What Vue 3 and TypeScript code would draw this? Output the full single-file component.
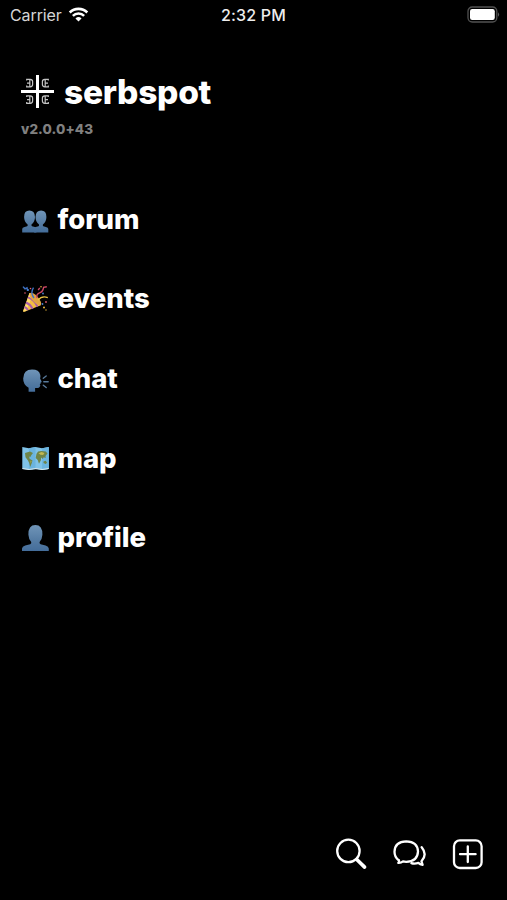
<script setup lang="ts">
interface MenuItem {
  icon: 'people' | 'party' | 'speaking' | 'map' | 'person'
  label: string
}

const items: MenuItem[] = [
  { icon: 'people', label: 'forum' },
  { icon: 'party', label: 'events' },
  { icon: 'speaking', label: 'chat' },
  { icon: 'map', label: 'map' },
  { icon: 'person', label: 'profile' },
]
</script>

<template>
  <div class="screen">
    <svg class="defs" width="0" height="0" aria-hidden="true">
      <defs>
        <linearGradient id="blue" x1="0" y1="0" x2="0" y2="1">
          <stop offset="0" stop-color="#7095b8" />
          <stop offset="0.6" stop-color="#547ba3" />
          <stop offset="1" stop-color="#446d9a" />
        </linearGradient>
      </defs>
    </svg>

    <div class="status">
      <div class="carrier">
        <span>Carrier</span>
        <svg width="21" height="16" viewBox="0 0 22 16" fill="none" stroke="#fff">
          <path d="M1.8 5.4a13 13 0 0 1 18.4 0" stroke-width="2.7" />
          <path d="M5.1 8.9a8.2 8.2 0 0 1 11.8 0" stroke-width="2.6" />
          <path d="M7.8 11.6a4.6 4.6 0 0 1 6.4 0L11 14.8z" fill="#fff" stroke="none" />
        </svg>
      </div>
      <div class="time">2:32 PM</div>
      <div class="battery">
        <svg width="34" height="18" viewBox="0 0 34 18">
          <rect x="2" y="1" width="28.8" height="15" rx="4.2" fill="#000" stroke="#515151" stroke-width="1.3" />
          <rect x="4" y="3" width="24.8" height="11" rx="2.2" fill="#fff" />
          <path d="M32 6.2q2.2 2.3 0 4.6z" fill="#5c5c5c" />
        </svg>
      </div>
    </div>

    <header class="header">
      <div class="brand">
        <svg class="logo" width="33" height="33" viewBox="0 0 33 33">
          <path d="M16.5 0v33M0 16.5h33" stroke="#fff" stroke-width="3" />
          <g fill="none" stroke="#c4c4c4" stroke-width="1.2">
            <path id="ocilo" d="M27.3 5.6V4.4h-3.5q-2.4 0-2.4 2.2v3q0 2.2 2.4 2.2h3.5v-1.2M24.2 4.6v7M24.2 8.1h2.8" />
            <use href="#ocilo" transform="translate(33 0) scale(-1 1)" />
            <use href="#ocilo" transform="translate(0 16.5)" />
            <use href="#ocilo" transform="translate(33 16.5) scale(-1 1)" />
          </g>
        </svg>
        <h1>serbspot</h1>
      </div>
      <p class="version">v2.0.0+43</p>
    </header>

    <nav class="menu">
      <a v-for="item in items" :key="item.label" class="item">
        <svg class="emoji" width="28" height="28" viewBox="0 0 28 28">
          <g v-if="item.icon === 'people'" fill="url(#blue)">
            <path d="M1.2 26.5v-3.4q0-1.6 2.4-2.1l2.6-.8q.8-.4.4-1.6-3.5-3-3.5-7.6 0-6.4 5.3-6.4t5.6 6.4q0 4.6-3.5 7.6-.3 1.2.5 1.6l2.8.8q1 .3 1.6 1v4.5z" />
            <path d="M27.3 26.5v-3.4q0-1.6-2.4-2.1l-2.6-.8q-.8-.4-.4-1.6 3.5-3 3.5-7.6 0-6.4-5.3-6.4t-5.6 6.4q0 4.6 3.5 7.6.3 1.2-.5 1.6l-2.8.8q-1 .3-1.6 1v4.5z" />
          </g>
          <g v-else-if="item.icon === 'party'">
            <path d="M8.5 8Q17 12 19.8 20.2L3.5 26.8Q1.8 27.4 2.2 25.6z" fill="#f3bd43" />
            <path d="M8.5 8Q10 9 11.5 10L5.4 26 2.2 26.6z" fill="#ffdc6b" />
            <path d="M7 12.4q6.8 3 9.4 9.2M5 17.5q4.6 2 6.6 6.4M3.5 22q2.4 1 3.4 3.2" fill="none" stroke="#a85da9" stroke-width="2" />
            <ellipse cx="14.4" cy="14" rx="3.1" ry="8" transform="rotate(-42 14.4 14)" fill="#e0a443" />
            <path d="M13 13Q9 8 12.5 2.7M2 1.6l2 2.2 2-1 .6 3" fill="none" stroke="#3e72c4" stroke-width="1.4" />
            <path d="M16 13q-1-4 2.5-5.2t4.1-5.5l3.2-.6M17.2 5l1.6-2.2" fill="none" stroke="#cb4966" stroke-width="1.4" />
            <path d="M17 15q4-4.6 9.8-2.4" fill="none" stroke="#ecc544" stroke-width="1.4" />
            <g fill="#4b82cf"><circle cx="7" cy="5" r="1" /><circle cx="22" cy="8.5" r=".9" /><circle cx="21.5" cy="19" r=".9" /></g>
            <g fill="#e15f73"><circle cx="25" cy="17" r=".9" /><circle cx="9.5" cy="3.5" r=".8" /><circle cx="4" cy="8" r=".8" /></g>
            <g fill="#e8b83d"><circle cx="23" cy="22.5" r="1" /><circle cx="20" cy="1.8" r=".8" /><circle cx="25" cy="25" r=".7" /></g>
          </g>
          <g v-else-if="item.icon === 'speaking'">
            <path d="M7.6 26.7v-4Q2 19.5 2.2 13.4 2.5 4.6 11 4.6q7.2 0 8.3 5.4.4 1.9-.2 3.4l1.5 3q.3.8-1 1l.1 1.2-1 .7.6 1q-.1 1.4-1.2 2.2-1 .8-4 .5v3.7z" fill="url(#blue)" />
            <path d="M22.3 13.3l2.9-2.3M22.8 16.8h4.4M22.3 20.2l2.9 2.3" stroke="#587a9b" stroke-width="1.4" stroke-linecap="round" />
          </g>
          <g v-else-if="item.icon === 'map'" transform="translate(.5 -1.3)">
            <path d="M.8 3.4l6.6 1.1 6.6-1.1 6.6 1.1 6.7-1.1v22l-6.7 1-6.6-1-6.6 1-6.6-1z" fill="#80c3e8" />
            <path d="M7.4 4.5L14 3.4v22l-6.6 1zM20.6 4.5l6.7-1.1v22l-6.7 1z" fill="#6bb4df" />
            <path d="M3.5 9.2l5-1.4 3 1.4-1.6 2.1-1 2-1.2-.5.4 2.2 2.9 1.8-1 3.2-1.3 3.2-1-3.8-1.2-2.5-2.5-3.3zM15 10l1.6-2.2 3.3-.6 4.4.7 1.7 2-2 2.4.2 2-2-.7-1 1.7-1.6-1.5-.2 2.8-1.9 3.5-1.3-3.7-2-2zM22 17.7l2.2-.6 1.4 2-1.5 1.1-2.1-1z" fill="#6f8548" />
            <path d="M17 9.5l3-1.3 3 1-1.4 2.2-2.6-.3zM9 17l1 .3-.8 2.5z" fill="#c3b952" />
            <path d="M1 24.8l6.4 1 6.6-1 6.6 1 6.5-1" fill="none" stroke="#d7e5e9" stroke-width="1.2" />
          </g>
          <path v-else fill="url(#blue)" transform="translate(.4 0)" d="M.6 27v-2.4q.2-2.2 3.2-3l5-1.4q1.5-.6 1-2.2-2.6-2.8-2.8-7.2Q6.8 1 14 1t7 9.8q-.2 4.4-2.8 7.2-.5 1.6 1 2.2l5 1.4q3 .8 3.2 3V27z" />
        </svg>
        <span class="label">{{ item.label }}</span>
      </a>
    </nav>

    <footer class="toolbar">
      <svg width="32" height="32" viewBox="0 0 32 32" fill="none" stroke="#fff" stroke-linecap="round">
        <circle cx="12.4" cy="12.9" r="11.2" stroke-width="2.3" />
        <path d="M20.8 21.5l7.8 7.6" stroke-width="3.6" />
      </svg>
      <svg width="34" height="30" viewBox="0 0 34 30" fill="none" stroke="#fff" stroke-width="2.3" stroke-linejoin="round" stroke-linecap="round">
        <path d="M5.2 20.8Q1.5 17.6 1.5 12.7 1.8 2.5 13.2 2.3 24.6 2.5 25 12.5 24.6 22.6 13.2 22.8q-1.8 0-3.2-.4-2 1.7-4.7 1.5 1.1-1.4.7-2.6" />
        <path d="M28.7 8.2q6 7.4-.2 14.1l1.1 3.6q-2.5-.3-4.2-2-4 1.3-7 .2" />
      </svg>
      <svg width="31" height="31" viewBox="0 0 31 31" fill="none" stroke="#fff" stroke-width="2.3" stroke-linecap="round">
        <rect x="2" y="1.4" width="27.6" height="27.6" rx="5.8" />
        <path d="M15.8 7.4v15.6M8 15.2h15.6" />
      </svg>
    </footer>
  </div>
</template>

<style>
body {
  margin: 0;
  background: #000;
}
</style>

<style scoped>
.screen {
  box-sizing: border-box;
  width: 507px;
  height: 900px;
  display: flex;
  flex-direction: column;
  background: #000;
  color: #fff;
  font-family: Inter, 'Liberation Sans', sans-serif;
  overflow: hidden;
}
.defs {
  position: absolute;
}
.status {
  display: grid;
  grid-template-columns: 1fr auto 1fr;
  align-items: center;
  height: 30px;
  padding: 0 7px 0 10px;
  font-size: 16px;
}
.carrier {
  display: flex;
  align-items: center;
  gap: 6px;
  color: #d5d5d5;
  letter-spacing: -0.1px;
}
.time {
  margin-right: 3px;
  font-weight: 500;
  letter-spacing: 0.15px;
  color: #eee;
}
.battery {
  display: flex;
  justify-content: flex-end;
}
.header {
  padding: 42px 21px 0;
}
.brand {
  display: flex;
  align-items: center;
  gap: 10px;
  height: 40px;
}
.logo {
  margin-bottom: 2px;
}
h1 {
  margin: 0;
  font-size: 33.5px;
  line-height: 40px;
  font-weight: 800;
  letter-spacing: -0.28px;
}
.version {
  margin: 8px 0 0;
  font-size: 13.5px;
  line-height: 18px;
  font-weight: 800;
  letter-spacing: 0.1px;
  color: #808080;
}
.menu {
  display: flex;
  flex-direction: column;
  padding: 42px 21px 0;
}
.item {
  display: flex;
  align-items: center;
  gap: 8.5px;
  height: 79.6px;
  font-size: 27.5px;
  font-weight: 800;
  letter-spacing: -0.08px;
}
.label {
  padding-bottom: 2px;
}
.toolbar {
  display: flex;
  align-items: center;
  justify-content: flex-end;
  gap: 25px;
  margin-top: auto;
  padding: 0 24px 30px;
}
</style>
